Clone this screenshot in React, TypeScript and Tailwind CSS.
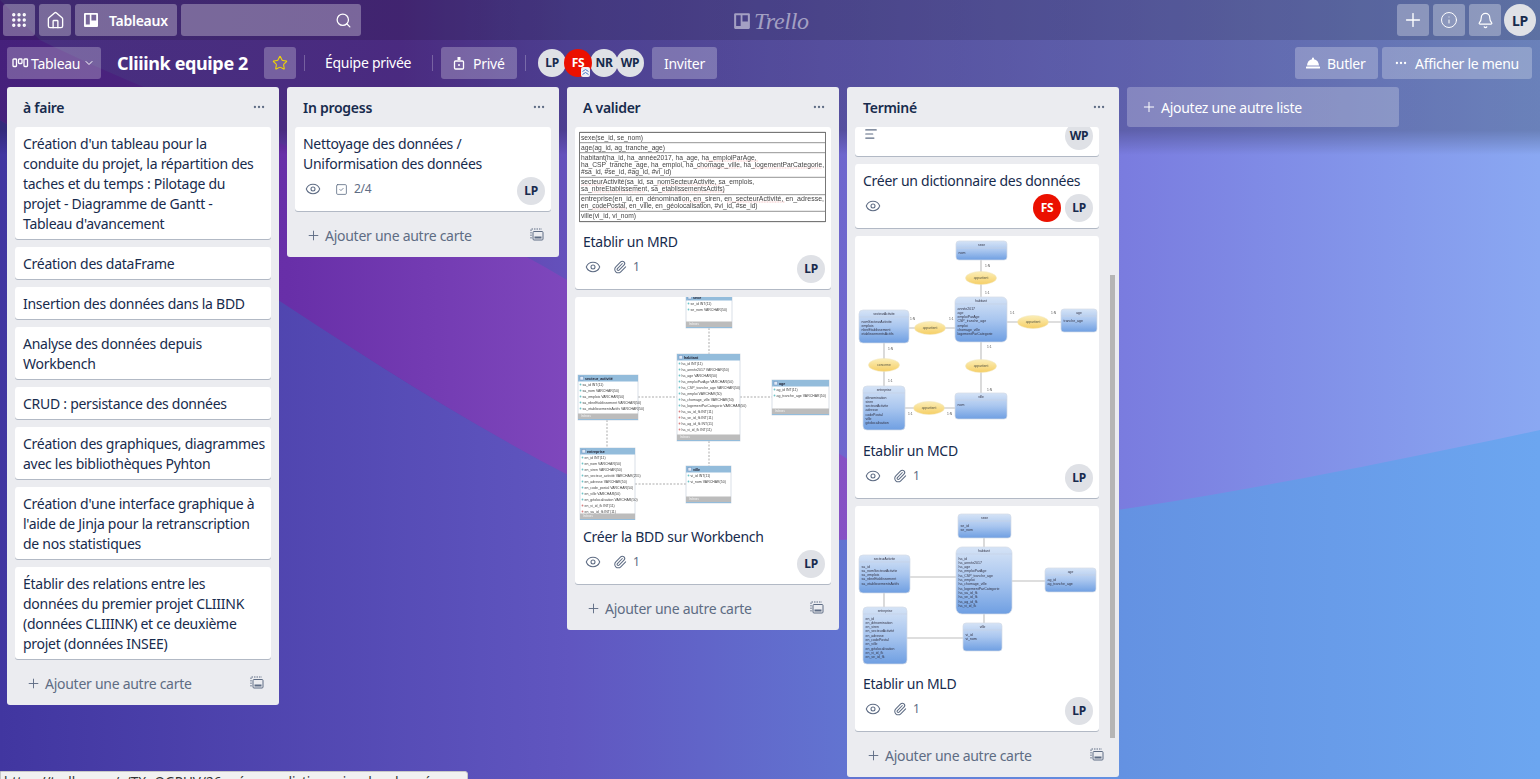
import React from 'react';
import {
  Grip,
  House,
  Search,
  Plus,
  Info,
  Bell,
  Star,
  ChevronDown,
  Ellipsis,
  Eye,
  Paperclip,
  SquareCheck,
  AlignLeft,
} from 'lucide-react';

const TopButton: React.FC<{ children: React.ReactNode; className?: string }> = ({ children, className = 'w-8' }) => (
  <div className={`h-8 ${className} rounded-[3px] bg-white/30 flex items-center justify-center text-white`}>{children}</div>
);

const BoardButton: React.FC<{ children: React.ReactNode; className?: string }> = ({ children, className = '' }) => (
  <div className={`h-8 rounded-[3px] bg-white/25 flex items-center text-white text-[14px] ${className}`}>{children}</div>
);

const Avatar: React.FC<{ initials: string; red?: boolean; className?: string }> = ({ initials, red, className = '' }) => (
  <div
    className={`w-7 h-7 rounded-full flex items-center justify-center text-[12px] font-bold shrink-0 ${
      red ? 'bg-[#eb1000] text-white' : 'bg-[#dfe1e6] text-[#172b4d]'
    } ${className}`}
  >
    {initials}
  </div>
);

const TrelloMark: React.FC<{ size: number; className?: string }> = ({ size, className }) => (
  <svg width={size} height={size} viewBox="0 0 16 16" className={className}>
    <path
      fillRule="evenodd"
      fill="currentColor"
      d="M2 1h12a1 1 0 0 1 1 1v12a1 1 0 0 1-1 1H2a1 1 0 0 1-1-1V2a1 1 0 0 1 1-1zm.8 1.8v9.6h4v-9.6zm5.6 0v5.6h4.800V2.800z"
    />
  </svg>
);

const TemplateIcon = () => (
  <svg width="14" height="14" viewBox="0 0 14 14" fill="none" stroke="#5e6c84" strokeWidth="1">
    <path d="M1 3V1h11" strokeDasharray="1.500 1" />
    <path d="M1 4v7" strokeDasharray="1.500 1" />
    <rect x="3" y="3.500" width="10" height="8.500" rx="1" />
    <rect x="4.500" y="8.500" width="7" height="2" fill="#5e6c84" stroke="none" />
  </svg>
);

const AddCard = () => (
  <div className="h-[46px] pt-[2px] flex items-center pl-[19px] pr-[15px] text-[#5e6c84] text-[14px] shrink-0">
    <Plus size={15} strokeWidth={1.5} className="mr-[4px]" />
    <span>Ajouter une autre carte</span>
    <span className="ml-auto">
      <TemplateIcon />
    </span>
  </div>
);

const ListHeader: React.FC<{ title: string }> = ({ title }) => (
  <div className="h-10 flex items-center justify-between pl-4 pr-[13px] shrink-0">
    <span className="text-[14px] font-semibold text-[#172b4d]">{title}</span>
    <Ellipsis size={14} className="text-[#5e6c84]" />
  </div>
);

const Card: React.FC<{ children: React.ReactNode; className?: string }> = ({ children, className = '' }) => (
  <div className={`bg-white rounded-[3px] shadow-[0_1px_0_rgba(9,30,66,0.25)] text-[14px] leading-5 text-[#172b4d] ${className}`}>
    {children}
  </div>
);

const TextCard: React.FC<{ lines: string[] }> = ({ lines }) => (
  <Card className="px-2 pt-[7px] pb-[5px]">
    {lines.map((l) => (
      <div key={l} className="whitespace-nowrap">
        {l}
      </div>
    ))}
  </Card>
);

const Badges: React.FC<{ attach?: boolean; check?: string; children: React.ReactNode }> = ({ attach, check, children }) => (
  <div className="mt-[3px] h-7 flex items-center justify-between">
    <div className="flex items-center text-[#5e6c84] text-[12px] -mt-[4px] pl-[2px]">
      <Eye size={16} strokeWidth={1.6} />
      {attach && (
        <>
          <Paperclip size={14} strokeWidth={1.8} className="ml-[12px]" />
          <span className="ml-[6px]">1</span>
        </>
      )}
      {check && (
        <>
          <SquareCheck size={13} strokeWidth={1.5} className="ml-[14px]" />
          <span className="ml-[6px]">{check}</span>
        </>
      )}
    </div>
    <div className="flex gap-1 mr-[-2px]">{children}</div>
  </div>
);

const ImageCard: React.FC<{ title: string; h: string; children: React.ReactNode }> = ({ title, h, children }) => (
  <Card className="overflow-hidden">
    <div className={`${h} overflow-hidden tracking-normal`}>{children}</div>
    <div className="px-2 pt-[7px] pb-[6px]">
      <div>{title}</div>
      <Badges attach>
        <Avatar initials="LP" />
      </Badges>
    </div>
  </Card>
);

/* --- pictures attached to the cards --- */

const mrdRows = [5.3, 15.7, 25.7, 50.3, 67.7, 84.3, 94.7];
const mrdText: [number, string][] = [
  [12.8, 'sexe(se_id, se_nom)'],
  [22.8, 'age(ag_id, ag_tranche_age)'],
  [32.8, 'habitant(ha_id, ha_année2017, ha_age, ha_emploiParAge,'],
  [39.8, 'ha_CSP_tranche_age, ha_emploi, ha_chomage_ville, ha_logementParCategorie,'],
  [46.8, '#sa_id, #se_id, #ag_id, #vi_id)'],
  [56.8, 'secteurActivité(sa_id, sa_nomSecteurActivite, sa_emplois,'],
  [63.8, 'sa_nbreEtablissement, sa_etablissementsActifs)'],
  [73.8, 'entreprise(en_id, en_dénomination, en_siren, en_secteurActivité, en_adresse,'],
  [80.8, 'en_codePostal, en_ville, en_géolocalisation, #vi_id, #se_id)'],
  [90.8, 'ville(vi_id, vi_nom)'],
];

// spell checker squiggles under the words of the captured document: y, x1, x2
const mrdSquiggles: [number, number, number][] = [
  [34, 131, 183],
  [41, 122, 165],
  [41, 178, 247],
  [58, 6, 30],
  [58, 82, 145],
  [65, 17, 70],
  [65, 87, 150],
  [75, 108, 128],
  [75, 152, 210],
  [82, 17, 52],
];

const MrdPicture = () => (
  <svg width="256" height="98" viewBox="0 0 256 98" className="blur-[0.3px]">
    <rect x="4.500" y="5.500" width="246" height="89" fill="white" stroke="#777" />
    {mrdRows.map((y) => (
      <line key={y} x1="4.500" x2="250.500" y1={y} y2={y} stroke="#777" strokeWidth="0.8" />
    ))}
    {mrdSquiggles.map(([y, a, b]) => (
      <line key={`${y}-${a}`} x1={a} x2={b} y1={y} y2={y} stroke="#ef8a8a" strokeWidth="0.5" strokeDasharray="1 0.6" />
    ))}
    {mrdText.map(([y, t]) => (
      <text
        key={y}
        x="6"
        y={y}
        fontSize="6.700"
        fontFamily="Liberation Sans, sans-serif"
        fill="#444"
        textLength={t.length > 70 ? 243 : undefined}
        lengthAdjust="spacingAndGlyphs"
      >
        {t}
      </text>
    ))}
  </svg>
);

type WbProps = { x: number; y: number; w: number; h: number; title: string; rows: string[]; fk?: number };

const WbTable: React.FC<WbProps> = ({ x, y, w, h, title, rows, fk = 0 }) => (
  <g fontFamily="Liberation Sans, sans-serif">
    <rect x={x} y={y} width={w} height={h} fill="white" stroke="#cfd8e0" strokeWidth="0.8" />
    <rect x={x} y={y} width={w} height={6.500} fill="#93bcdb" />
    <rect x={x + 2} y={y + 1.500} width="3.500" height="3.500" fill="#dfe9f5" stroke="#5b7fb5" strokeWidth="0.400" />
    <text x={x + 7} y={y + 4.600} fontSize="3.700" fontWeight="bold" fill="#223">
      {title}
    </text>
    {rows.map((r, i) => (
      <g key={r}>
        <circle cx={x + 2.500} cy={y + 9.500 + i * 6} r="0.900" fill={i >= rows.length - fk ? '#d98080' : '#6cc4c8'} />
        <text x={x + 4.500} y={y + 10.800 + i * 6} fontSize="3.500" fill="#444">
          {r}
        </text>
      </g>
    ))}
    <rect x={x} y={y + h - 6.500} width={w} height={5.500} fill="#bcbcbc" />
    <rect x={x} y={y + h - 1} width={w} height={1} fill="#93bcdb" />
    <text x={x + 3} y={y + h - 2.800} fontSize="2.800" fill="#f4f4f4">
      Indexes
    </text>
  </g>
);

const BddPicture = () => (
  <svg width="256" height="223" viewBox="0 0 256 223" className="blur-[0.35px]">
    <g stroke="#888" strokeWidth="0.7" strokeDasharray="2 1.500" fill="none">
      <path d="M134 31V57M134 144V169M63 100H102M165 100H197M32 123V151M60 187H111" />
    </g>
    <WbTable x={111} y={-3} w={46} h={34} title="sexe" rows={['se_id INT(11)', 'se_nom VARCHAR(50)']} />
    <WbTable
      x={102}
      y={57}
      w={63}
      h={87}
      title="habitant"
      fk={4}
      rows={[
        'ha_id INT(11)',
        'ha_année2017 VARCHAR(50)',
        'ha_age VARCHAR(50)',
        'ha_emploiParAge VARCHAR(50)',
        'ha_CSP_tranche_age VARCHAR(50)',
        'ha_emploi VARCHAR(50)',
        'ha_chomage_ville VARCHAR(50)',
        'ha_logementParCategorie VARCHAR(50)',
        'ha_sa_id_fk INT(11)',
        'ha_se_id_fk INT(11)',
        'ha_ag_id_fk INT(11)',
        'ha_vi_id_fk INT(11)',
      ]}
    />
    <WbTable
      x={3}
      y={78}
      w={60}
      h={45}
      title="secteur_activité"
      rows={[
        'sa_id INT(11)',
        'sa_nom VARCHAR(50)',
        'sa_emplois VARCHAR(50)',
        'sa_nbreEtablissement VARCHAR(50)',
        'sa_etablissementsActifs VARCHAR(50)',
      ]}
    />
    <WbTable x={197} y={83} w={57} h={35} title="age" rows={['ag_id INT(11)', 'ag_tranche_age VARCHAR(50)']} />
    <WbTable
      x={5}
      y={151}
      w={55}
      h={72}
      title="entreprise"
      fk={2}
      rows={[
        'en_id INT(11)',
        'en_nom VARCHAR(50)',
        'en_siren VARCHAR(50)',
        'en_secteur_activité VARCHAR(255)',
        'en_adresse VARCHAR(50)',
        'en_code_postal VARCHAR(50)',
        'en_ville VARCHAR(50)',
        'en_géolocalisation VARCHAR(50)',
        'en_vi_id_fk INT(11)',
        'en_sa_id_fk INT(11)',
      ]}
    />
    <WbTable x={111} y={169} w={45} h={37} title="ville" rows={['vi_id INT(11)', 'vi_nom VARCHAR(50)']} />
  </svg>
);

type BoxProps = { x: number; y: number; w: number; h: number; title: string; rows: string[]; r?: number };

const UmlBox: React.FC<BoxProps> = ({ x, y, w, h, title, rows, r = 3 }) => (
  <g fontFamily="Liberation Sans, sans-serif" fill="#334">
    <rect x={x} y={y} width={w} height={h} rx={r} fill="url(#umlBlue)" stroke="#d4dbe6" strokeWidth="0.700" />
    <line x1={x} x2={x + w} y1={y + 7} y2={y + 7} stroke="#c8d2e2" strokeWidth="0.600" />
    <text x={x + w / 2} y={y + 4.800} fontSize="3.300" textAnchor="middle">
      {title}
    </text>
    {rows.map((t, i) => (
      <text key={t} x={x + 2.500} y={y + 12.500 + i * 4.300} fontSize="3.500">
        {t}
      </text>
    ))}
  </g>
);

const Oval: React.FC<{ x: number; y: number; label: string }> = ({ x, y, label }) => (
  <g>
    <ellipse cx={x} cy={y} rx="15.500" ry="6.500" fill="url(#umlYellow)" stroke="#f0e4b8" strokeWidth="0.500" />
    <text x={x} y={y + 1.200} fontSize="3.300" textAnchor="middle" fill="#554" fontFamily="Liberation Sans, sans-serif">
      {label}
    </text>
  </g>
);

const Tag: React.FC<{ x: number; y: number; t: string }> = ({ x, y, t }) => (
  <text x={x} y={y} fontSize="3.300" fill="#555" fontFamily="Liberation Sans, sans-serif">
    {t}
  </text>
);

const UmlDefs = () => (
  <defs>
    <linearGradient id="umlBlue" x1="0" y1="0" x2="0" y2="1">
      <stop offset="0" stopColor="#d5e3f6" />
      <stop offset="0.500" stopColor="#a9c6ef" />
      <stop offset="1" stopColor="#6f9fe2" />
    </linearGradient>
    <linearGradient id="umlYellow" x1="0" y1="0" x2="0" y2="1">
      <stop offset="0" stopColor="#fbeeb8" />
      <stop offset="1" stopColor="#f6cf66" />
    </linearGradient>
  </defs>
);

const McdPicture = () => (
  <svg width="244" height="198" viewBox="0 0 244 198" className="blur-[0.25px]">
    <UmlDefs />
    <g stroke="#bdbdbd" strokeWidth="1.100" fill="none">
      <path d="M126 24V61M126 106V157M152 86H206M54 92H100M29 107V150M50 172H100" />
    </g>
    <UmlBox x={101} y={5} w={51} h={19} title="sexe" rows={['nom']} />
    <UmlBox
      x={100}
      y={61}
      w={52}
      h={45}
      r={5}
      title="habitant"
      rows={['année2017', 'age', 'emploiParAge', 'CSP_tranche_age', 'emploi', 'chomage_ville', 'logementParCategorie']}
    />
    <UmlBox
      x={4}
      y={74}
      w={50}
      h={33}
      r={4}
      title="secteurActivite"
      rows={['nomSecteurActivite', 'emplois', 'nbreEtablissement', 'etablissementsActifs']}
    />
    <UmlBox x={206} y={73} w={36} h={23} title="age" rows={['tranche_age']} />
    <UmlBox
      x={8}
      y={150}
      w={42}
      h={44}
      r={4}
      title="entreprise"
      rows={['dénomination', 'siren', 'secteurActivite', 'adresse', 'codePostal', 'ville', 'géolocalisation']}
    />
    <UmlBox x={100} y={157} w={52} h={26} title="ville" rows={['nom']} />
    <Oval x={126} y={42} label="appartient" />
    <Oval x={75} y={92} label="appartient" />
    <Oval x={178} y={86} label="appartient" />
    <Oval x={126} y={130} label="appartient" />
    <Oval x={29} y={129} label="concerne" />
    <Oval x={74} y={172} label="appartient" />
    <Tag x={130} y={31} t="1:N" />
    <Tag x={130} y={58} t="1:1" />
    <Tag x={155} y={78} t="1:1" />
    <Tag x={196} y={78} t="1:N" />
    <Tag x={55} y={84} t="1:N" />
    <Tag x={94} y={84} t="1:1" />
    <Tag x={132} y={112} t="1:1" />
    <Tag x={132} y={155} t="1:N" />
    <Tag x={33} y={114} t="1:N" />
    <Tag x={33} y={146} t="1:1" />
    <Tag x={53} y={179} t="1:1" />
    <Tag x={92} y={179} t="1:N" />
  </svg>
);

const MldPicture = () => (
  <svg width="244" height="161" viewBox="0 0 244 161" className="blur-[0.25px]">
    <UmlDefs />
    <g stroke="#bdbdbd" strokeWidth="1.100" fill="none">
      <path d="M129 32V41M55 71H101M157 75H190M29 87V101M129 108V117M52 132H108" />
    </g>
    <UmlBox x={103} y={8} w={53} h={24} title="sexe" rows={['se_id', 'se_nom']} />
    <UmlBox
      x={101}
      y={41}
      w={56}
      h={67}
      r={6}
      title="habitant"
      rows={[
        'ha_id',
        'ha_année2017',
        'ha_age',
        'ha_emploiParAge',
        'ha_CSP_tranche_age',
        'ha_emploi',
        'ha_chomage_ville',
        'ha_logementParCategorie',
        'ha_sa_id_fk',
        'ha_se_id_fk',
        'ha_ag_id_fk',
        'ha_vi_id_fk',
      ]}
    />
    <UmlBox
      x={4}
      y={49}
      w={51}
      h={38}
      r={4}
      title="secteurActivite"
      rows={['sa_id', 'sa_nomSecteurActivite', 'sa_emplois', 'sa_nbreEtablissement', 'sa_etablissementsActifs']}
    />
    <UmlBox x={190} y={62} w={51} h={24} title="age" rows={['ag_id', 'ag_tranche_age']} />
    <UmlBox
      x={8}
      y={101}
      w={44}
      h={57}
      r={4}
      title="entreprise"
      rows={[
        'en_id',
        'en_dénomination',
        'en_siren',
        'en_secteurActivité',
        'en_adresse',
        'en_codePostal',
        'en_ville',
        'en_géolocalisation',
        'en_vi_id_fk',
        'en_se_id_fk',
      ]}
    />
    <UmlBox x={108} y={117} w={39} h={28} title="ville" rows={['vi_id', 'vi_nom']} />
  </svg>
);

const Background = () => (
  <svg width="1540" height="779" viewBox="0 0 1540 779" className="absolute inset-0">
    <defs>
      <linearGradient id="bgBase" x1="0" y1="0" x2="1" y2="0">
        <stop offset="0" stopColor="#4136a0" />
        <stop offset="0.370" stopColor="#6056c0" />
        <stop offset="0.730" stopColor="#6492e2" />
        <stop offset="1" stopColor="#6ca6f0" />
      </linearGradient>
      <linearGradient id="bgUpper" x1="0" y1="0" x2="1" y2="0">
        <stop offset="0" stopColor="#5d3ea5" />
        <stop offset="0.260" stopColor="#6037a6" />
        <stop offset="0.370" stopColor="#6452bc" />
        <stop offset="0.730" stopColor="#7a7cdf" />
        <stop offset="1" stopColor="#8aa8f2" />
      </linearGradient>
      <linearGradient id="bgPurple" x1="0" y1="0" x2="1" y2="0">
        <stop offset="0" stopColor="#5a2aa0" />
        <stop offset="0.300" stopColor="#682fa8" />
        <stop offset="0.600" stopColor="#7f48bd" />
        <stop offset="1" stopColor="#8a55c8" />
      </linearGradient>
    </defs>
    <rect width="1540" height="779" fill="url(#bgBase)" />
    <path d="M0 120C200 240 420 410 640 510C800 570 1120 520 1540 430V0H0Z" fill="url(#bgUpper)" />
    <path d="M0 0L40 40C180 110 400 180 567 280C700 360 860 470 960 530C800 550 700 540 640 510C420 410 200 240 0 120Z" fill="url(#bgPurple)" />
  </svg>
);

const App: React.FC = () => {
  return (
    <div
      className="relative w-[1540px] h-[779px] overflow-hidden tracking-[-0.27px]"
      style={{ fontFamily: '"Noto Sans", "Open Sans", sans-serif' }}
    >
      <Background />
      <div className="absolute inset-x-0 top-0 h-[155px] bg-[linear-gradient(to_bottom,rgba(0,0,0,0.23)_84%,rgba(0,0,0,0))]" />

      <div className="relative flex flex-col h-full">
        {/* top bar */}
        <header className="h-10 shrink-0 bg-black/12 flex items-center pl-[3px] pr-[4px] gap-1 relative">
          <TopButton>
            <Grip size={18} strokeWidth={2.5} />
          </TopButton>
          <TopButton>
            <House size={19} strokeWidth={1.7} />
          </TopButton>
          <TopButton className="w-[102px] justify-start pl-2 gap-[10px] text-[14px] font-semibold">
            <TrelloMark size={16} />
            <span>Tableaux</span>
          </TopButton>
          <TopButton className="w-[180px] justify-end pr-[9px]">
            <Search size={17} strokeWidth={1.8} />
          </TopButton>
          <div className="absolute left-[733px] top-[9px] flex items-center gap-[3px] text-white/50">
            <TrelloMark size={18} />
            <span className="text-[24px] leading-6 italic" style={{ fontFamily: '"Liberation Serif", serif' }}>
              Trello
            </span>
          </div>
          <div className="ml-auto flex items-center gap-1">
            <TopButton>
              <Plus size={22} strokeWidth={1.5} />
            </TopButton>
            <TopButton>
              <Info size={18} strokeWidth={1.3} />
            </TopButton>
            <TopButton>
              <Bell size={17} strokeWidth={1.7} />
            </TopButton>
            <Avatar initials="LP" className="!w-8 !h-8 !text-[14px] ml-[-1px]" />
          </div>
        </header>

        {/* board header */}
        <div className="h-[47px] shrink-0 flex items-start pt-[7px] pl-[7px] pr-2">
          <BoardButton className="w-[94px] pl-[5px]">
            <svg width="17" height="12" viewBox="0 0 17 12" fill="none" stroke="white" strokeWidth="1.300">
              <rect x="1" y="2" width="3.500" height="7.500" rx="0.800" />
              <rect x="6.500" y="2" width="3.500" height="4.500" rx="0.800" />
              <rect x="12" y="2" width="3.500" height="7.500" rx="0.800" />
            </svg>
            <span className="ml-[2px]">Tableau</span>
            <ChevronDown size={12} className="ml-[3px]" />
          </BoardButton>
          <div className="ml-4 w-[131px] text-[18px] leading-8 font-bold text-white whitespace-nowrap tracking-[-0.37px]">
            Cliiink equipe 2
          </div>
          <BoardButton className="ml-4 w-8 justify-center">
            <Star size={16} strokeWidth={1.6} className="text-[#f2d600]" />
          </BoardButton>
          <div className="w-px h-4 bg-white/25 mt-2 ml-2" />
          <div className="ml-5 w-[87px] text-white text-[14px] leading-8 whitespace-nowrap">Équipe privée</div>
          <div className="w-px h-4 bg-white/25 mt-2 ml-5" />
          <BoardButton className="ml-2 w-[76px] pl-[12px]">
            <svg width="12" height="14" viewBox="0 0 12 14" fill="none" stroke="white" strokeWidth="1.300">
              <rect x="1.500" y="5" width="9" height="8" rx="1" />
              <rect x="4.500" y="1" width="3" height="3" fill="white" stroke="none" />
              <circle cx="6" cy="9" r="1" fill="white" stroke="none" />
            </svg>
            <span className="ml-[8px]">Privé</span>
          </BoardButton>
          <div className="w-px h-4 bg-white/25 mt-2 ml-2" />
          <div className="flex ml-3 mt-[2px]">
            <Avatar initials="LP" />
            <div className="relative -ml-[2px]">
              <Avatar initials="FS" red />
              <svg width="9" height="10" viewBox="0 0 9 10" className="absolute right-[2px] bottom-0">
                <rect width="9" height="10" rx="2" fill="#eef0f5" />
                <path d="M1.500 4.500L4.500 2.500L7.500 4.500M1.500 7.500L4.500 5.500L7.500 7.500" stroke="#4c78c8" strokeWidth="1" fill="none" />
              </svg>
            </div>
            <Avatar initials="NR" className="-ml-[2px]" />
            <Avatar initials="WP" className="-ml-[2px]" />
          </div>
          <BoardButton className="ml-2 w-[65px] justify-center">Inviter</BoardButton>
          <div className="ml-auto flex gap-1">
            <BoardButton className="w-[83px] pl-[10px]">
              <svg width="16" height="14" viewBox="0 0 16 14" fill="white">
                <path d="M8 1.500a1 1 0 0 1 1 1v.7c2.900.5 4.800 3 5 6.300H2c.2-3.300 2.100-5.800 5-6.300v-.7a1 1 0 0 1 1-1z" />
                <rect x="1" y="10.500" width="14" height="2" rx="0.500" />
              </svg>
              <span className="ml-[6px]">Butler</span>
            </BoardButton>
            <BoardButton className="w-[150px] pl-[12px]">
              <Ellipsis size={14} />
              <span className="ml-[7px] whitespace-nowrap">Afficher le menu</span>
            </BoardButton>
          </div>
        </div>

        {/* lists */}
        <div className="flex items-start gap-2 pl-[7px]">
          <section className="w-[272px] bg-[#ebecf0] rounded-[3px]">
            <ListHeader title="à faire" />
            <div className="px-2 flex flex-col gap-2">
              <TextCard
                lines={[
                  "Création d'un tableau pour la",
                  'conduite du projet, la répartition des',
                  'taches et du temps : Pilotage du',
                  'projet - Diagramme de Gantt -',
                  "Tableau d'avancement",
                ]}
              />
              <TextCard lines={['Création des dataFrame']} />
              <TextCard lines={['Insertion des données dans la BDD']} />
              <TextCard lines={['Analyse des données depuis', 'Workbench']} />
              <TextCard lines={['CRUD : persistance des données']} />
              <TextCard lines={['Création des graphiques, diagrammes', 'avec les bibliothèques Pyhton']} />
              <TextCard
                lines={[
                  "Création d'une interface graphique à",
                  "l'aide de Jinja pour la retranscription",
                  'de nos statistiques',
                ]}
              />
              <TextCard
                lines={[
                  'Établir des relations entre les',
                  'données du premier projet CLIIINK',
                  '(données CLIIINK) et ce deuxième',
                  'projet (données INSEE)',
                ]}
              />
            </div>
            <AddCard />
          </section>

          <section className="w-[272px] bg-[#ebecf0] rounded-[3px]">
            <ListHeader title="In progess" />
            <div className="px-2">
              <Card className="px-2 pt-[7px] pb-[6px]">
                <div>Nettoyage des données /</div>
                <div>Uniformisation des données</div>
                <Badges check="2/4">
                  <Avatar initials="LP" />
                </Badges>
              </Card>
            </div>
            <AddCard />
          </section>

          <section className="w-[272px] bg-[#ebecf0] rounded-[3px]">
            <ListHeader title="A valider" />
            <div className="px-2 flex flex-col gap-2">
              <ImageCard title="Etablir un MRD" h="h-[98px]">
                <MrdPicture />
              </ImageCard>
              <ImageCard title="Créer la BDD sur Workbench" h="h-[223px]">
                <BddPicture />
              </ImageCard>
            </div>
            <AddCard />
          </section>

          <section className="relative w-[272px] bg-[#ebecf0] rounded-[3px]">
            <ListHeader title="Terminé" />
            <div className="pl-2 w-[252px] flex flex-col gap-2">
              <Card className="h-[29px] overflow-hidden px-2 flex justify-between items-start">
                <AlignLeft size={14} strokeWidth={2} className="text-[#5e6c84] mt-0 ml-[1px]" />
                <Avatar initials="WP" className="-mt-[5px] mr-[-2px]" />
              </Card>
              <Card className="px-2 pt-[7px] pb-[6px]">
                <div>Créer un dictionnaire des données</div>
                <Badges>
                  <Avatar initials="FS" red />
                  <Avatar initials="LP" />
                </Badges>
              </Card>
              <ImageCard title="Etablir un MCD" h="h-[198px]">
                <McdPicture />
              </ImageCard>
              <ImageCard title="Etablir un MLD" h="h-[161px]">
                <MldPicture />
              </ImageCard>
            </div>
            <AddCard />
            <div className="absolute left-[263px] top-[188px] w-[5px] h-[463px] bg-[#b5b5b5]" />
          </section>

          <div className="w-[272px] h-10 rounded-[3px] bg-white/24 flex items-center pl-[14px] text-white text-[14px]">
            <Plus size={16} strokeWidth={1.5} className="mr-[4px]" />
            <span>Ajoutez une autre liste</span>
          </div>
        </div>
      </div>

      {/* status bubble of the browser */}
      <div className="absolute left-0 top-[771px] w-[468px] h-[10px] bg-[#f1f1f1] border border-[#c8c8c8] rounded-tr-[3px] overflow-hidden pl-[3px] text-[13.5px] leading-[20px] text-[#333] whitespace-nowrap tracking-normal">
        https://trello.com/c/TXoOGPUV/26-créer-un-dictionnaire-des-données
      </div>
    </div>
  );
};

export default App;
